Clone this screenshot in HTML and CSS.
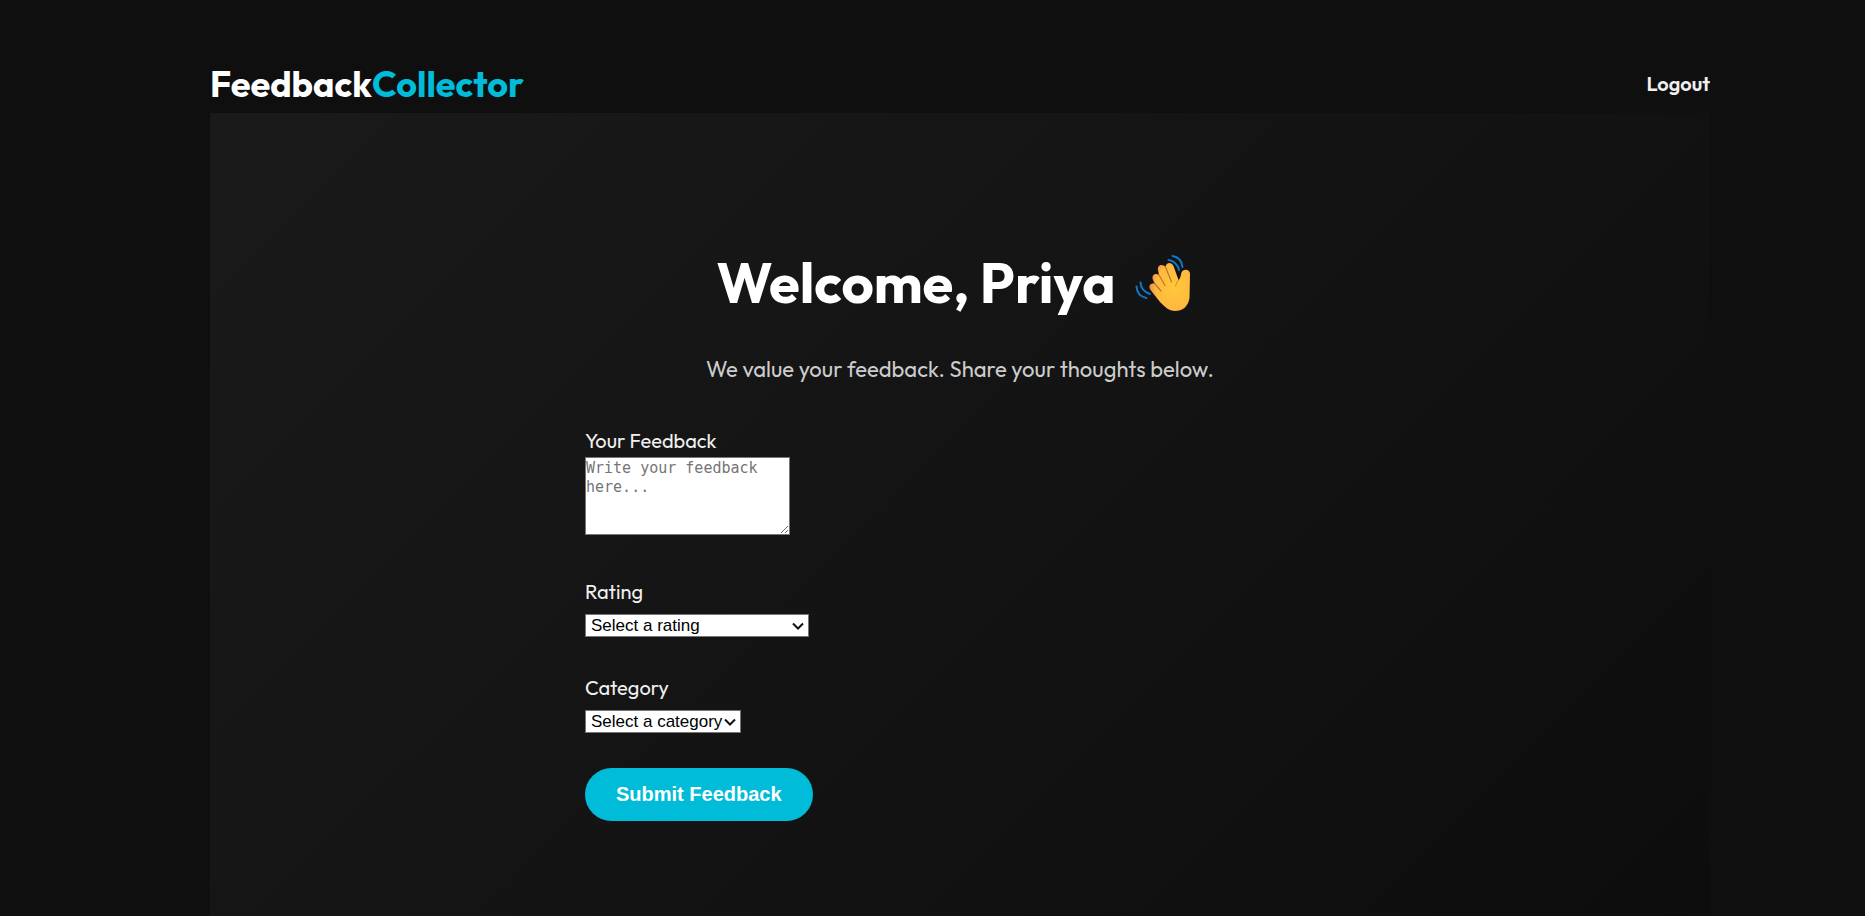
FILE: index.html
```html
<!DOCTYPE html>
<html lang="en">
<head>
<meta charset="utf-8">
<title>FeedbackCollector</title>
<link rel="stylesheet" href="styles.css">
</head>
<body>
<div class="page">
  <header class="header">
    <div class="logo">Feedback<span class="accent">Collector</span></div>
    <nav class="nav"><a class="logout" href="#">Logout</a></nav>
  </header>
  <main class="panel">
    <h1 class="title">Welcome, Priya
      <svg class="wave" viewBox="0 0 58 58" aria-label="waving hand" role="img">
        <defs>
          <radialGradient id="skin" cx="0.62" cy="0.5" r="0.62">
            <stop offset="0" stop-color="#ffc83a"/>
            <stop offset="0.75" stop-color="#ffb93f"/>
            <stop offset="1" stop-color="#ee8a50"/>
          </radialGradient>
        </defs>
        <g fill="none" stroke="#0f78c8" stroke-width="2" stroke-linecap="round">
          <path d="M38.500 2Q47.500 3.500 48.500 13"/>
          <path d="M34.500 6Q43 7.500 45 16"/>
          <path d="M2.500 32.500Q3 42 12.500 44"/>
          <path d="M6.500 28.500Q7 37 16 40"/>
        </g>
        <path fill="url(#skin)" d="M16.500 36C13.500 31.500 17.500 28.500 21 30L19 26C17 20.500 21.500 18.500 25 21L24 16C23 10.500 29 9.500 31.500 13C32 8 37.500 7.500 39.500 12L44.500 26C46.500 25 47 20 47.500 18.500C49 14.500 56 15 56 20L55.500 44C54 53 48.500 57 41 57C35 57 31 53 26 48Z"/>
        <g fill="none" stroke="#b8772a" stroke-width="1.2" stroke-linecap="round">
          <path d="M21 30L27 37"/>
          <path d="M25 21L31 31.500"/>
          <path d="M31.500 13L37.500 28"/>
        </g>
        <path fill="none" stroke="#d88a2c" stroke-linecap="round" d="M44.500 26Q42.500 28 41.500 32"/>
      </svg>
    </h1>
    <p class="subtitle">We value your feedback. Share your thoughts below.</p>
    <form class="form">
      <div class="field field-text">
        <label for="feedback">Your Feedback</label>
        <textarea id="feedback" class="textarea" placeholder="Write your feedback here..."></textarea>
      </div>
      <div class="field">
        <label for="rating">Rating</label>
        <select id="rating" class="select select-rating"><option>Select a rating</option></select>
      </div>
      <div class="field">
        <label for="category">Category</label>
        <select id="category" class="select select-category"><option>Select a category</option></select>
      </div>
      <button class="submit" type="button">Submit Feedback</button>
    </form>
  </main>
</div>
</body>
</html>
```
FILE: styles.css
```css
* {
  box-sizing: border-box;
  margin: 0;
  padding: 0;
}

body {
  background: #0f0f0f;
  color: #f0f0f0;
  font-family: Outfit, Lato, sans-serif;
  font-size: 20px;
  line-height: 25px;
}

.page {
  display: flex;
  flex-direction: column;
  min-height: 100vh;
  padding: 60px 155px 0 210px;
}

.header {
  display: flex;
  align-items: center;
  justify-content: space-between;
  padding-bottom: 5px;
}

.logo {
  color: #fff;
  font-size: 36px;
  font-weight: 700;
  line-height: 48px;
}

.accent {
  color: #00bcd8;
}

.nav {
  padding-bottom: 2px;
}

.logout {
  color: #f0f0f0;
  font-weight: 600;
  text-decoration: none;
}

.panel {
  flex: 1;
  padding: 135px 32px 95px;
  background: linear-gradient(135deg, #1a1a1a, #0d0d0d);
}

.title {
  display: flex;
  align-items: center;
  justify-content: center;
  gap: 18px;
  padding-right: 12px;
  color: #fff;
  font-size: 56px;
  font-weight: 700;
  line-height: 70px;
}

.wave {
  width: 58px;
  height: 58px;
}

.subtitle {
  margin-top: 37px;
  color: #ccc;
  font-size: 22px;
  line-height: 28px;
  text-align: center;
}

.form {
  display: flex;
  flex-direction: column;
  align-items: flex-start;
  max-width: 750px;
  margin: 45px auto 0;
}

.field {
  display: flex;
  flex-direction: column;
  align-items: flex-start;
  gap: 10px;
  margin-bottom: 38px;
}

.field-text {
  gap: 4px;
  margin-bottom: 44px;
}

.textarea {
  width: 205px;
  height: 78px;
  padding-top: 1px;
  border: 1px solid #767676;
  background: #fff;
  font-family: Consolas, "DejaVu Sans Mono", monospace;
  font-size: 15px;
  line-height: 19px;
}

.textarea::placeholder {
  color: #757575;
}

.select {
  height: 23px;
  padding: 0 16px 0 5px;
  border: 1px solid #767676;
  border-radius: 0;
  appearance: none;
  background: #fff url("data:image/svg+xml,%3Csvg xmlns='http://www.w3.org/2000/svg' width='12' height='8' viewBox='0 0 12 8'%3E%3Cpath d='M1 1.500L6 6.500L11 1.500' fill='none' stroke='%23111' stroke-width='2'/%3E%3C/svg%3E") no-repeat right 4px center;
  color: #000;
  font-family: "Liberation Sans", Arial, sans-serif;
  font-size: 17px;
}

.select-rating {
  width: 224px;
}

.select-category {
  width: 156px;
}

.submit {
  margin-top: -3px;
  padding: 14px 31px;
  border: 0;
  border-radius: 30px;
  background: #00bcd8;
  color: #fff;
  font-family: "Liberation Sans", Arial, sans-serif;
  font-size: 20px;
  font-weight: 700;
  line-height: 25px;
}
```
